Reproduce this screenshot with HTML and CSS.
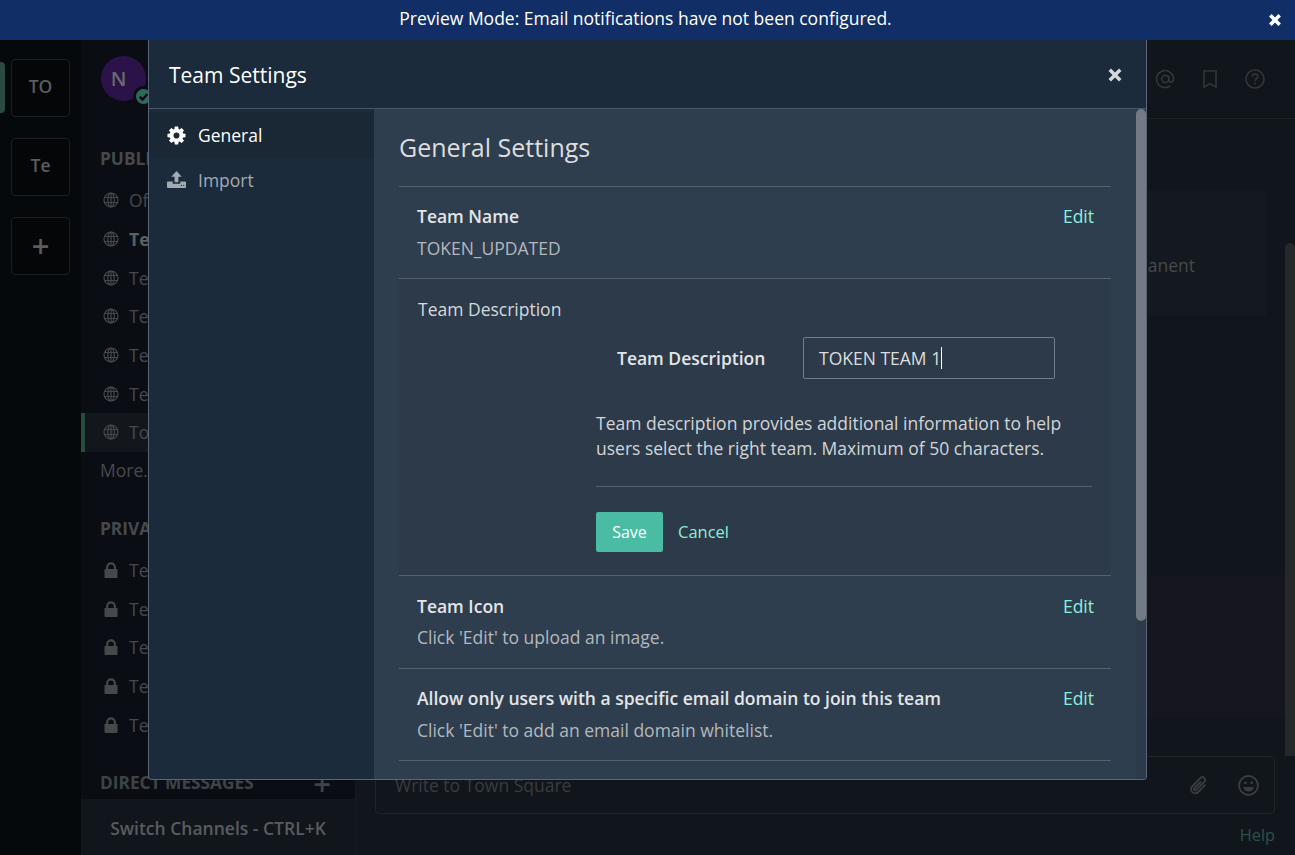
FILE: index.html
```html
<!DOCTYPE html>
<html lang="en">
<head>
  <meta charset="UTF-8">
  <title>Team Settings</title>
  <link rel="stylesheet" href="styles.css">
</head>
<body>
  <div class="banner">
    <span>Preview Mode: Email notifications have not been configured.</span>
    <svg class="banner-close" viewBox="0 0 12 12"><path d="M2 2l8 8M10 2l-8 8"/></svg>
  </div>

  <div class="app">
    <div class="teams">
      <div class="team-marker"></div>
      <div class="team-btn">TO</div>
      <div class="team-btn">Te</div>
      <div class="team-btn team-add">+</div>
    </div>

    <div class="sidebar">
      <div class="side-scroll">
        <div class="side-head">
          <div class="avatar">N
            <span class="status"><svg viewBox="0 0 12 12"><path d="M3 6.2l2.2 2.2L9.2 4"/></svg></span>
          </div>
        </div>
        <div class="group-title">PUBLIC CHANNELS</div>
        <div class="chan"><svg class="globe" viewBox="0 0 16 16"><use href="#i-globe"/></svg>Off-Topic</div>
        <div class="chan chan-unread"><svg class="globe" viewBox="0 0 16 16"><use href="#i-globe"/></svg>Team 1</div>
        <div class="chan"><svg class="globe" viewBox="0 0 16 16"><use href="#i-globe"/></svg>Team 2</div>
        <div class="chan"><svg class="globe" viewBox="0 0 16 16"><use href="#i-globe"/></svg>Team 3</div>
        <div class="chan"><svg class="globe" viewBox="0 0 16 16"><use href="#i-globe"/></svg>Team 4</div>
        <div class="chan"><svg class="globe" viewBox="0 0 16 16"><use href="#i-globe"/></svg>Team 5</div>
        <div class="chan chan-active"><svg class="globe" viewBox="0 0 16 16"><use href="#i-globe"/></svg>Town Square</div>
        <div class="more">More...</div>
        <div class="group-title group-private">PRIVATE CHANNELS</div>
        <div class="chan"><svg class="lock" viewBox="0 0 16 16"><use href="#i-lock"/></svg>Test 1</div>
        <div class="chan"><svg class="lock" viewBox="0 0 16 16"><use href="#i-lock"/></svg>Test 2</div>
        <div class="chan"><svg class="lock" viewBox="0 0 16 16"><use href="#i-lock"/></svg>Test 3</div>
        <div class="chan"><svg class="lock" viewBox="0 0 16 16"><use href="#i-lock"/></svg>Test 4</div>
        <div class="chan"><svg class="lock" viewBox="0 0 16 16"><use href="#i-lock"/></svg>Test 5</div>
        <div class="group-title group-direct"><span>DIRECT MESSAGES</span><b>+</b></div>
      </div>
      <div class="switch">Switch Channels - CTRL+K</div>
    </div>

    <div class="center">
      <div class="center-head">
        <svg class="head-icon" viewBox="0 0 20 20"><circle cx="10.2" cy="10" r="3.6"/><path d="M13.8 6.4v4.8c0 2.8 4.7 2.6 4.7-1.2a8.5 8.5 0 1 0-3.6 7"/></svg>
        <svg class="head-icon" viewBox="0 0 20 20"><path d="M4 2h12v16l-6-3.4L4 18z"/></svg>
        <svg class="head-icon" viewBox="0 0 20 20"><circle cx="10" cy="10" r="9"/><path d="M7.3 7.6c0-3.4 5.6-3.4 5.6-.1 0 2.3-2.9 2.2-2.9 4.6M10 13.6v1.8"/></svg>
      </div>
      <div class="center-body">
        <div class="posts">
          <div class="intro">
            <p>permanent</p>
          </div>
          <div class="new-band"></div>
        </div>
        <div class="center-track"><div class="center-thumb"></div></div>
      </div>
      <div class="composer">
        <div class="composer-box">
          <span>Write to Town Square</span>
          <svg class="clip" viewBox="0 0 20 20"><path d="M16.6 9.2l-6.9 7a3.9 3.9 0 0 1-5.6-5.5l7.7-7.8a2.6 2.6 0 0 1 3.7 3.7l-7.6 7.6a1.2 1.2 0 0 1-1.8-1.8l6.4-6.4"/></svg>
          <svg class="smile" viewBox="0 0 20 20"><circle cx="10" cy="10" r="9"/><circle class="dot" cx="7" cy="7.6" r="1.3"/><circle class="dot" cx="13" cy="7.6" r="1.3"/><path class="dot" d="M5 11.4h10c-.5 3-2.6 4.4-5 4.4s-4.500-1.400-5-4.400z"/></svg>
        </div>
        <div class="help">Help</div>
      </div>
    </div>

    <div class="modal">
      <div class="modal-head">
        <span>Team Settings</span>
        <svg class="modal-close" viewBox="0 0 12 12"><path d="M1.500 1.500l9 9M10.500 1.500l-9 9"/></svg>
      </div>
      <div class="modal-body">
        <div class="tabs">
          <div class="tab tab-on">
            <svg class="tab-icon" viewBox="-40 -40 1616 1616"><path d="M1024 768q0-106-75-181t-181-75-181 75-75 181 75 181 181 75 181-75 75-181zm512-109v222q0 12-8 23t-20 13l-185 28q-19 54-39 91 35 50 107 138 10 12 10 25t-9 23q-27 37-99 108t-94 71q-12 0-26-9l-138-108q-44 23-91 38-16 136-29 186-7 28-36 28h-222q-14 0-24.500-8.500t-11.500-21.500l-28-184q-49-16-90-37l-141 107q-10 9-25 9-14 0-25-11-126-114-165-168-7-10-7-23 0-12 8-23 15-21 51-66.500t54-70.500q-27-50-41-99l-183-27q-13-2-21-12.500t-8-23.500v-222q0-12 8-23t19-13l186-28q14-46 39-92-40-57-107-138-10-12-10-24 0-10 9-23 26-36 98.500-107.500t94.500-71.500q13 0 26 10l138 107q44-23 91-38 16-136 29-186 7-28 36-28h222q14 0 24.500 8.500t11.500 21.500l28 184q49 16 90 37l142-107q9-9 24-9 13 0 25 10 129 119 165 170 7 8 7 22 0 12-8 23-15 21-51 66.500t-54 70.500q26 50 41 98l183 28q13 2 21 12.500t8 23.500z"/></svg>
            General
          </div>
          <div class="tab">
            <svg class="tab-icon" viewBox="0 0 20 18"><path d="M10 0l5.500 6H12v6H8V6H4.500z"/><path d="M1 11h5v2.500h8V11h5a1 1 0 0 1 1 1v5a1 1 0 0 1-1 1H1a1 1 0 0 1-1-1v-5a1 1 0 0 1 1-1z"/><circle class="tray-dot" cx="15.200" cy="15.200" r=".7"/><circle class="tray-dot" cx="17.600" cy="15.200" r=".7"/></svg>
            Import
          </div>
        </div>

        <div class="main">
          <div class="main-inner">
            <h2>General Settings</h2>

            <div class="row">
              <div class="row-top"><b>Team Name</b><a class="edit">Edit</a></div>
              <div class="row-value">TOKEN_UPDATED</div>
            </div>

            <div class="row row-open">
              <div class="open-title">Team Description</div>
              <div class="field">
                <label>Team Description</label>
                <div class="fake-input">TOKEN TEAM 1<i class="caret"></i></div>
              </div>
              <div class="open-form">
                <p class="hint">Team description provides additional information to help users select the right team. Maximum of 50 characters.</p>
                <div class="actions">
                  <button class="save">Save</button>
                  <a class="cancel">Cancel</a>
                </div>
              </div>
            </div>

            <div class="row row-tall">
              <div class="row-top"><b>Team Icon</b><a class="edit">Edit</a></div>
              <div class="row-value">Click 'Edit' to upload an image.</div>
            </div>

            <div class="row">
              <div class="row-top"><b>Allow only users with a specific email domain to join this team</b><a class="edit">Edit</a></div>
              <div class="row-value">Click 'Edit' to add an email domain whitelist.</div>
            </div>
          </div>
          <div class="track"><div class="thumb"></div></div>
        </div>
      </div>
    </div>
  </div>

  <svg class="sprites" width="0" height="0">
    <symbol id="i-globe" viewBox="0 0 16 16">
      <g fill="none" stroke="currentColor" stroke-width="1.200">
        <circle cx="8" cy="8" r="7"/>
        <ellipse cx="8" cy="8" rx="3.200" ry="7"/>
        <path d="M1.500 5.500h13M1.500 10.500h13M8 1v14"/>
      </g>
    </symbol>
    <symbol id="i-lock" viewBox="0 0 16 16">
      <path fill="currentColor" d="M1.500 7h1.600V5.200a4.900 4.900 0 0 1 9.800 0V7h1.600v8.300a.7.700 0 0 1-.7.700H2.200a.7.700 0 0 1-.7-.7zM5.200 7h5.600V5.200a2.800 2.800 0 0 0-5.600 0z"/>
    </symbol>
  </svg>
</body>
</html>
```

FILE: styles.css
```css
* {
  box-sizing: border-box;
}

body {
  margin: 0;
  height: 855px;
  overflow: hidden;
  font-family: "Open Sans", sans-serif;
  font-size: 17.500px;
  background-color: #11161c;
}

.sprites {
  position: absolute;
}

.banner {
  position: relative;
  z-index: 2;
  display: flex;
  align-items: center;
  justify-content: center;
  height: 40px;
  padding: 0 4px 4px 0;
  background-color: #112f66;
  color: #fff;
}

.banner-close {
  position: absolute;
  right: 13px;
  top: 13px;
  width: 14px;
  height: 14px;
  fill: none;
  stroke: #fff;
  stroke-width: 3;
}

.app {
  position: relative;
  display: flex;
  height: 815px;
}

/* team column */
.teams {
  position: relative;
  width: 81px;
  padding: 19px 0 0 11px;
  background-color: #05090c;
}

.team-marker {
  position: absolute;
  left: 0;
  top: 22px;
  width: 5px;
  height: 51px;
  border-radius: 0 4px 4px 0;
  background-color: #2b4a40;
}

.team-btn {
  display: flex;
  align-items: center;
  justify-content: center;
  width: 59px;
  height: 58px;
  margin-bottom: 21px;
  padding-bottom: 5px;
  border: 1px solid #1c2025;
  border-radius: 4px;
  background-color: #040607;
  color: #5a5c5e;
  font-size: 17.500px;
  font-weight: 600;
}

.team-add {
  padding-bottom: 3px;
  font-size: 31px;
  font-weight: 600;
}

/* channel sidebar */
.sidebar {
  display: flex;
  flex-direction: column;
  width: 275px;
  background-color: #0a0e14;
  border-right: 1px solid #15191f;
  color: #46494c;
}

.side-scroll {
  flex: 1;
  padding-top: 16px;
}

.side-head {
  height: 91px;
  padding-left: 20px;
}

.avatar {
  position: relative;
  display: flex;
  align-items: center;
  justify-content: center;
  width: 45px;
  height: 45px;
  padding: 0 10px 1px 0;
  border-radius: 50%;
  background-color: #2b1248;
  color: #6a6a6e;
  font-size: 20px;
  font-weight: 600;
}

.status {
  position: absolute;
  right: -8px;
  bottom: -6px;
  display: flex;
  width: 21px;
  height: 21px;
  border: 3px solid #0a0e14;
  border-radius: 50%;
  background-color: #2e6a58;
}

.status svg {
  fill: none;
  stroke: #0a0e14;
  stroke-width: 2;
}

.group-title {
  display: flex;
  justify-content: space-between;
  height: 34px;
  padding: 0 24px 0 19px;
  font-size: 17.300px;
  font-weight: 700;
  line-height: 24px;
  white-space: nowrap;
}

.group-private {
  margin-top: 28px;
}

.group-direct {
  height: 24px;
  margin-top: 27px;
  color: #3f4246;
}

.group-direct b {
  font-size: 31px;
  font-weight: 600;
  line-height: 24px;
}

.chan {
  display: flex;
  align-items: center;
  height: 38.670px;
  padding-left: 22px;
  white-space: nowrap;
}

.chan-unread {
  font-weight: 700;
  color: #5d5f61;
}

.chan-active {
  padding-left: 18px;
  border-left: 4px solid #2b4a40;
  background-color: #13171d;
}

.globe,
.lock {
  flex: none;
  width: 16px;
  height: 16px;
  margin-right: 10px;
  color: #46494c;
}

.more {
  height: 37px;
  padding-left: 19px;
  line-height: 37px;
}

.switch {
  display: flex;
  align-items: center;
  justify-content: center;
  height: 56px;
  padding-top: 1px;
  background-color: #11161c;
  color: #595c5f;
  font-weight: 600;
  white-space: nowrap;
}

/* center channel */
.center {
  display: flex;
  flex-direction: column;
  flex: 1;
  min-width: 0;
  background-color: #11161c;
}

.center-head {
  display: flex;
  justify-content: flex-end;
  align-items: center;
  gap: 25px;
  height: 79px;
  padding: 0 30px 0 0;
  border-bottom: 1px solid #1e2227;
}

.head-icon {
  width: 20px;
  height: 20px;
  fill: none;
  stroke: #33363a;
  stroke-width: 1.600;
}

.center-body {
  display: flex;
  flex: 1;
  min-height: 0;
}

.posts {
  flex: 1;
  padding: 71px 19px 0 19px;
  color: #46494c;
}

.intro {
  height: 126px;
  padding: 63px 71px 0 60px;
  background-color: #14191f;
  text-align: right;
  white-space: nowrap;
  overflow: hidden;
}

.intro p {
  margin: 0;
}

.new-band {
  height: 143px;
  margin: 259px -19px 0 -19px;
  background-color: #15161e;
}

.center-track {
  width: 10px;
  padding-top: 124px;
}

.center-thumb {
  height: 513px;
  border-radius: 5px 5px 0 0;
  background-color: #26292c;
}

.composer {
  height: 99px;
  padding: 0 20px 0 19px;
}

.composer-box {
  display: flex;
  align-items: center;
  height: 58px;
  padding: 0 15px 0 19px;
  border: 1px solid #1f2429;
  border-radius: 4px;
  color: #393c3f;
}

.composer-box span {
  flex: 1;
}

.clip,
.smile {
  width: 21px;
  height: 21px;
  fill: none;
  stroke: #3a3d40;
  stroke-width: 1.800;
}

.clip {
  margin-right: 29px;
}

.smile .dot {
  fill: #3a3d40;
  stroke: none;
}

.help {
  margin-top: 10px;
  text-align: right;
  color: #2c5049;
  font-size: 16.300px;
}

/* modal */
.modal {
  position: absolute;
  left: 148px;
  top: 0;
  display: flex;
  flex-direction: column;
  width: 999px;
  height: 740px;
  border: 1px solid #5a6675;
  border-top: none;
  border-radius: 0 0 4px 4px;
  overflow: hidden;
  background-color: #1b2b3c;
  color: #ddd;
}

.modal-head {
  display: flex;
  flex: none;
  align-items: center;
  justify-content: space-between;
  height: 69px;
  padding: 2px 24px 0 20px;
  border-bottom: 1px solid #4b5765;
  color: #fff;
  font-size: 21px;
}

.modal-close {
  width: 14px;
  height: 14px;
  fill: none;
  stroke: #d6d8db;
  stroke-width: 3;
}

.modal-body {
  display: flex;
  flex: 1;
  min-height: 0;
}

.tabs {
  flex: none;
  width: 225px;
  padding-top: 3px;
}

.tab {
  display: flex;
  align-items: center;
  height: 45px;
  padding: 0 0 2px 18px;
  color: #a4aab1;
}

.tab-on {
  height: 46px;
  padding-bottom: 0;
  background-color: #1a2735;
  color: #fff;
}

.tab-icon {
  flex: none;
  width: 19px;
  height: 19px;
  margin-right: 12px;
  fill: currentColor;
}

.tray-dot {
  fill: #1b2b3c;
}

.main {
  display: flex;
  flex: 1;
  min-width: 0;
  background-color: #2f3e4e;
}

.main-inner {
  flex: 1;
  min-width: 0;
  padding: 0 25px;
}

h2 {
  height: 78px;
  margin: 0;
  padding-top: 20px;
  border-bottom: 1px solid #56616e;
  font-size: 25px;
  font-weight: 400;
  line-height: 36px;
}

.row {
  height: 92px;
  padding: 17px 17px 0 18px;
  border-bottom: 1px solid #56616e;
}

.row-tall {
  height: 93px;
  padding-top: 18px;
}

.row-tall .row-value {
  margin-top: 7px;
}

.row-top {
  display: flex;
  justify-content: space-between;
}

.row-top b {
  font-weight: 600;
  color: #e3e5e7;
}

.edit {
  color: #8ceeda;
}

.row-value {
  margin-top: 8px;
  color: #b3b8bd;
}

.row-open {
  height: 297px;
  padding: 18px 19px 0 19px;
  background-color: #2c3a49;
}

.open-title {
  color: #d6d9dc;
}

.field {
  display: flex;
  align-items: center;
  margin-top: 16px;
  padding-left: 199px;
}

.field label {
  width: 186px;
  font-weight: 600;
  color: #e3e5e7;
}

.fake-input {
  display: flex;
  align-items: center;
  width: 252px;
  height: 42px;
  padding-left: 15px;
  border: 1px solid #747e8a;
  border-radius: 2px;
}

.caret {
  width: 1px;
  height: 22px;
  background-color: #fff;
}

.open-form {
  margin: 0 0 0 178px;
  padding-top: 32px;
  color: #d2d5d8;
}

.hint {
  margin: 0;
  padding-bottom: 25px;
  border-bottom: 1px solid #56616e;
  line-height: 25px;
}

.actions {
  display: flex;
  align-items: center;
  gap: 15px;
  margin-top: 25px;
  font-size: 16.500px;
}

.save {
  width: 67px;
  height: 40px;
  border: none;
  border-radius: 2px;
  background-color: #4abca3;
  color: #fff;
  font: 500 16px "Open Sans", sans-serif;
}

.cancel {
  padding-bottom: 2px;
  color: #8ceeda;
}

.track {
  flex: none;
  width: 10px;
  background-color: #2c3a49;
}

.thumb {
  height: 512px;
  border-radius: 5px;
  background-color: #717a85;
}
```
